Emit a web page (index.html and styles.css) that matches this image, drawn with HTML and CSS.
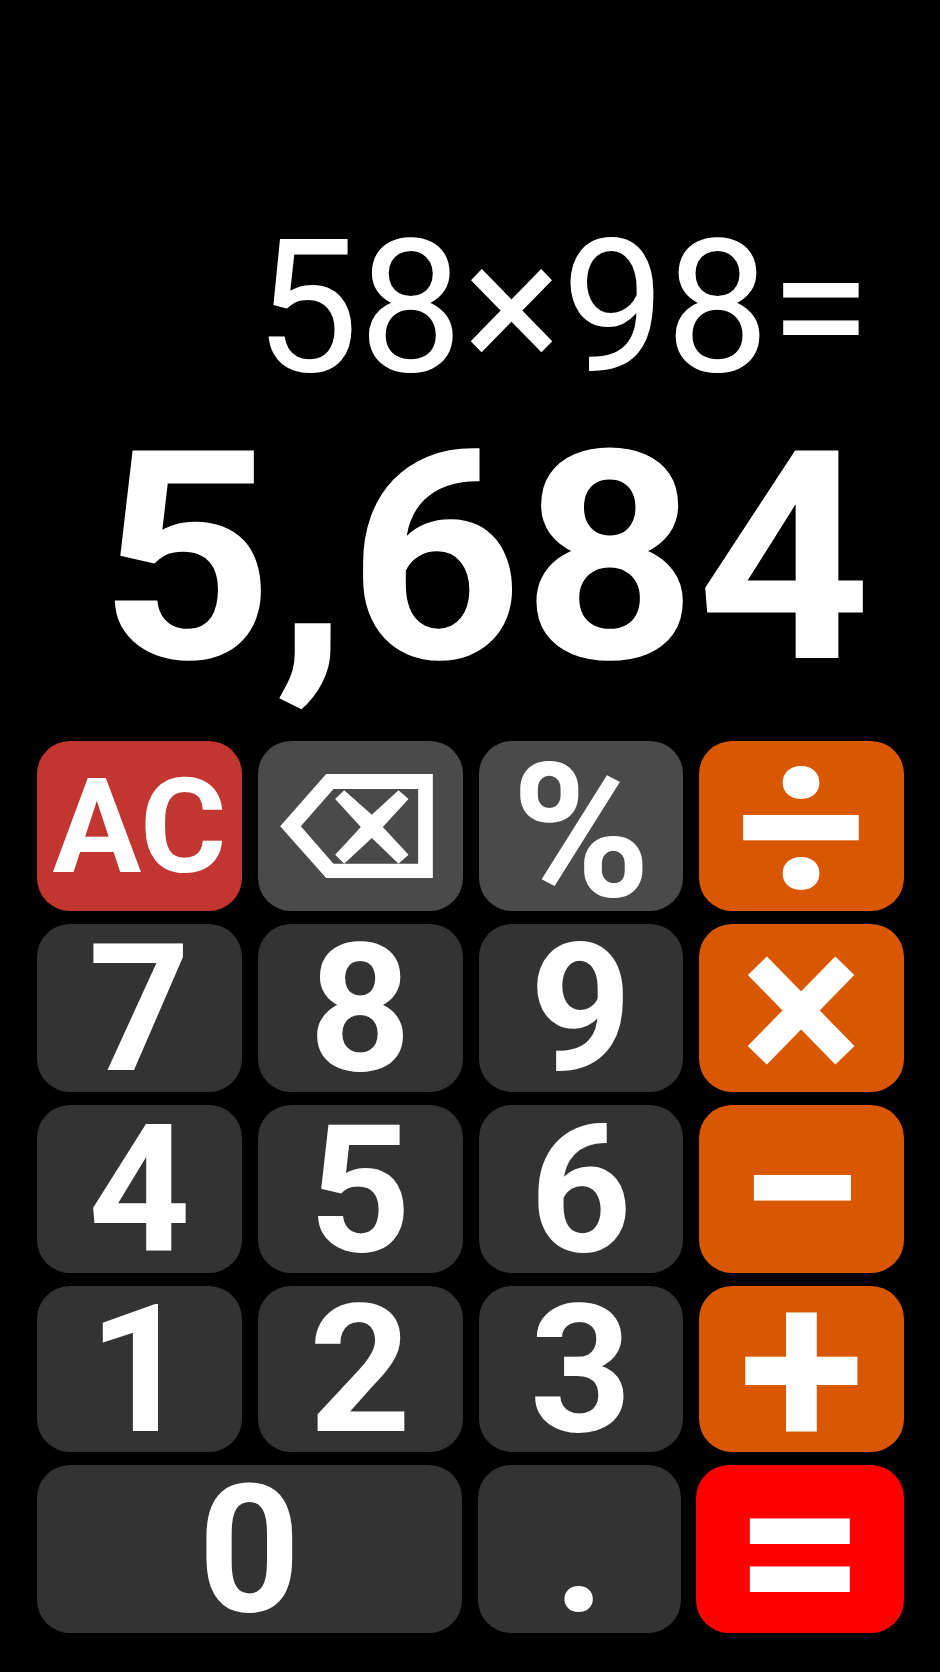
FILE: index.html
```html
<!DOCTYPE html>
<html lang="en">
<head>
  <meta charset="UTF-8">
  <title>Calculator</title>
  <link rel="stylesheet" href="styles.css">
</head>
<body>
  <div class="display">
    <div class="expression">58×98=</div>
    <div class="result">5,684</div>
  </div>

  <div class="keypad">
    <div class="key key-clear">AC</div>
    <div class="key key-func key-back">
      <svg class="backspace" viewBox="70 103 458 312">
        <path class="backspace-fill" fill-rule="evenodd" d="M70 260L208 103H528V415H208ZM132 260L230 372H484V148H230Z"/>
        <path class="backspace-fill" d="M235 178L262 152L345 225L425 152L455 178L378 262L455 345L425 372L345 295L262 372L235 345L312 262Z"/>
      </svg>
    </div>
    <div class="key key-func key-percent">%</div>
    <div class="key key-op">÷</div>

    <div class="key">7</div>
    <div class="key">8</div>
    <div class="key">9</div>
    <div class="key key-op">×</div>

    <div class="key">4</div>
    <div class="key">5</div>
    <div class="key">6</div>
    <div class="key key-op">−</div>

    <div class="key">1</div>
    <div class="key">2</div>
    <div class="key">3</div>
    <div class="key key-op">+</div>

    <div class="key key-zero">0</div>
    <div class="key key-dot">.</div>
    <div class="key key-equals">=</div>
  </div>
</body>
</html>
```

FILE: styles.css
```css
html, body {
  height: 100%;
  margin: 0;
  padding: 0;
}

body {
  display: flex;
  flex-direction: column;
  justify-content: flex-end;
  padding: 0 36px 39px 37px;
  box-sizing: border-box;
  background-color: #000;
  color: #fff;
  font-family: Roboto, "Liberation Sans", sans-serif;
  overflow: hidden;
}

.display {
  display: flex;
  flex-direction: column;
  align-items: flex-end;
  margin-bottom: 33px;
  padding-right: 33px;
}

.expression {
  font-size: 185px;
  line-height: 200px;
}

.result {
  font-size: 292px;
  line-height: 300px;
  font-weight: 700;
  transform: scaleX(1.04);
  transform-origin: right center;
}

.keypad {
  display: grid;
  grid-template-columns: repeat(4, 1fr);
  grid-template-rows: 170px 168px 168px 166px 168px;
  column-gap: 16px;
  row-gap: 13px;
}

.key {
  display: flex;
  align-items: center;
  justify-content: center;
  padding-top: 2px;
  box-sizing: border-box;
  border-radius: 33px;
  background-color: #333;
  font-size: 178px;
  font-weight: 700;
  line-height: 160px;
}

.key-clear {
  background-color: #c33530;
  font-size: 132px;
}

.key-func {
  background-color: #4a4a4a;
}

.key-back {
  padding: 0 7px 0 0;
}

.key-percent {
  padding-top: 11px;
  font-size: 188px;
}

.key-op {
  background-color: #d95700;
  font-size: 230px;
}

.key-equals {
  margin-left: -3px;
  background-color: #fe0000;
  font-size: 228px;
}

.key-zero {
  grid-column: span 2;
  margin-right: 1px;
}

.key-dot {
  margin: 0 2px 0 -1px;
}

.backspace {
  width: 153px;
  height: 104px;
}

.backspace-fill {
  fill: #fff;
}
```
